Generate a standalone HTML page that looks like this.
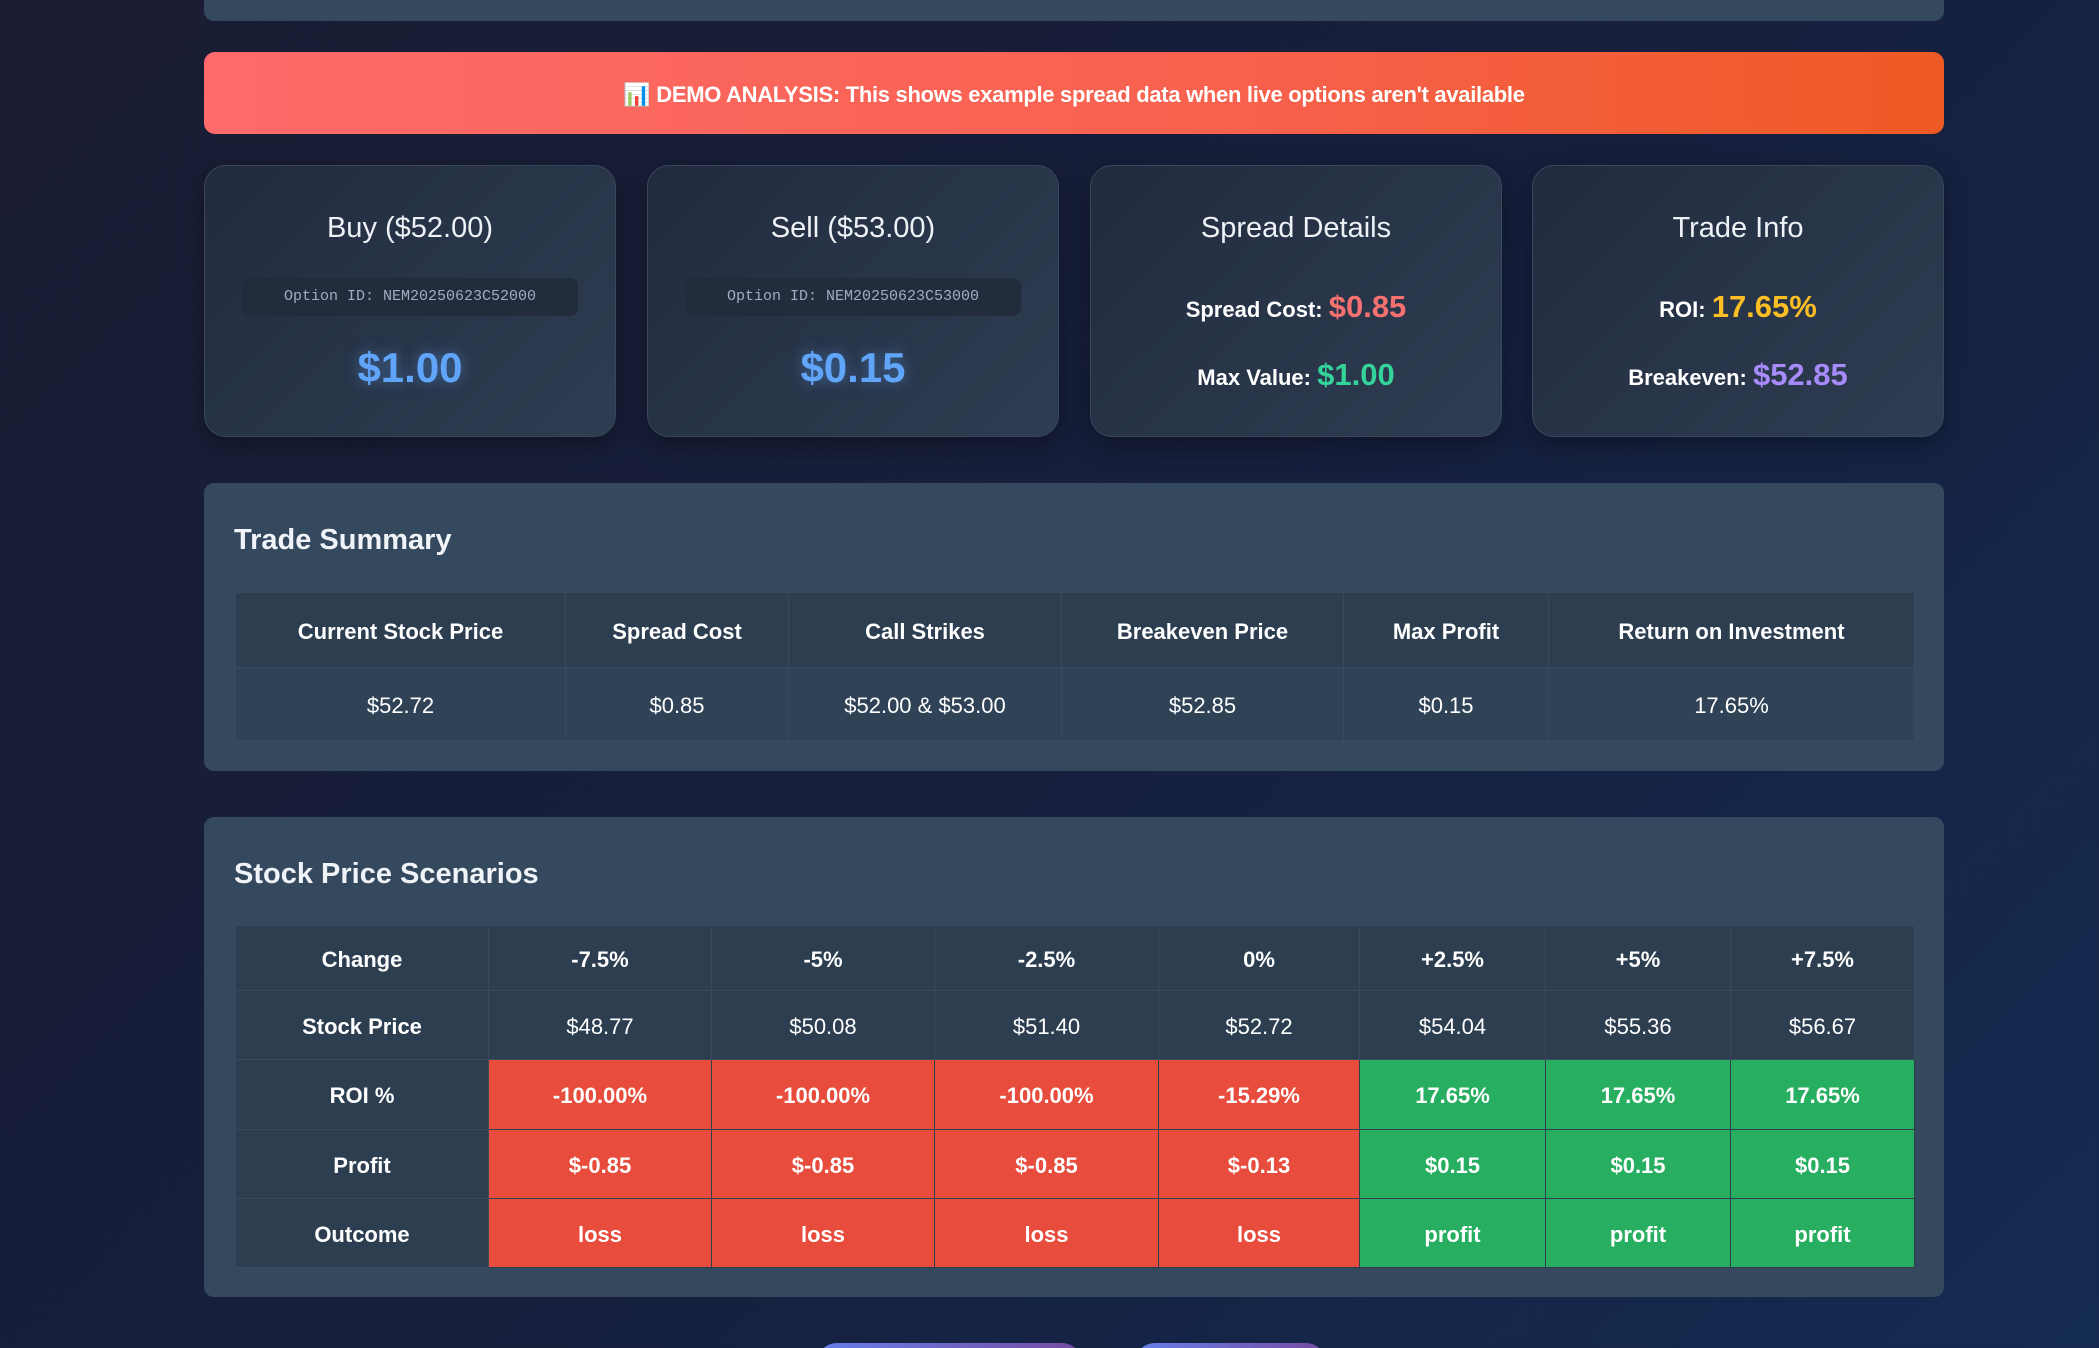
<!DOCTYPE html>
<html><head><meta charset="utf-8"><style>
*{box-sizing:border-box;margin:0;padding:0}
html,body{width:2099px;height:1348px;overflow:hidden}
body{background:linear-gradient(135deg,#1a1d33 0%,#161f3c 50%,#142b52 100%);font-family:"Liberation Sans",sans-serif;color:#fff;position:relative}
.top{position:absolute;left:204px;top:-20px;width:1740px;height:41px;background:#34495e;border-radius:10px}
.banner{position:absolute;left:204px;top:52px;width:1740px;height:82px;border-radius:11px;background:linear-gradient(90deg,#ff6b6b 0%,#f7614d 60%,#ee5a24 100%);display:flex;align-items:center;justify-content:center;font-weight:bold;font-size:22px;letter-spacing:-0.3px;padding-top:3px}
.card{position:absolute;top:165px;width:412px;height:272px;border-radius:22px;background:linear-gradient(135deg,#222b3e,#2e3d52);border:1px solid #3a475b;box-shadow:0 8px 24px rgba(0,0,0,.35);text-align:center}
.ct{position:absolute;left:0;right:0;top:46px;font-size:29px;color:#eef2f7}
.oid{position:absolute;left:37px;right:37px;top:112px;height:38px;border-radius:8px;background:#222c3c;font-family:"Liberation Mono",monospace;font-size:15px;color:#a0aec0;line-height:38px}
.price{position:absolute;left:0;right:0;top:178px;font-size:42px;font-weight:bold;color:#60a5fa;text-shadow:0 0 14px rgba(96,165,250,.5)}
.ln{position:absolute;left:0;right:0;font-size:22px;font-weight:bold;color:#fff}
.ln span{font-size:31px}
.sec{position:absolute;left:204px;width:1740px;background:#34495e;border-radius:10px}
.sec h2{position:absolute;left:30px;font-size:29px;font-weight:bold;color:#f0f3f7}
table{position:absolute;left:31px;border-collapse:collapse;table-layout:fixed;width:1679px}
td{border:1px solid #3a4a5e;text-align:center;font-size:22px;background:#2c3e50;color:#fff;padding-top:3px}
.h td{font-weight:bold}
.b{font-weight:bold}
.r{background:#e74c3c!important;border-color:#2c3e50}
.g{background:#27ae60!important;border-color:#2c3e50}
.btn{position:absolute;top:1343px;height:40px;border-radius:20px;background:linear-gradient(90deg,#667eea,#764ba2)}
</style></head><body>
<div class="top"></div>
<div class="banner">📊&nbsp;DEMO ANALYSIS: This shows example spread data when live options aren't available</div>

<div class="card" style="left:204px"><div class="ct">Buy ($52.00)</div><div class="oid">Option ID: NEM20250623C52000</div><div class="price">$1.00</div></div>
<div class="card" style="left:647px"><div class="ct">Sell ($53.00)</div><div class="oid">Option ID: NEM20250623C53000</div><div class="price">$0.15</div></div>
<div class="card" style="left:1090px"><div class="ct">Spread Details</div>
<div class="ln" style="top:123px">Spread Cost: <span style="color:#f87171">$0.85</span></div>
<div class="ln" style="top:191px">Max Value: <span style="color:#34d399">$1.00</span></div></div>
<div class="card" style="left:1532px"><div class="ct">Trade Info</div>
<div class="ln" style="top:123px">ROI: <span style="color:#fbbf24">17.65%</span></div>
<div class="ln" style="top:191px">Breakeven: <span style="color:#a78bfa">$52.85</span></div></div>

<div class="sec" style="top:483px;height:288px">
<h2 style="top:41px">Trade Summary</h2>
<table style="top:109px">
<colgroup><col style="width:330px"><col style="width:223px"><col style="width:273px"><col style="width:282px"><col style="width:205px"><col style="width:366px"></colgroup>
<tr class="h" style="height:75px"><td>Current Stock Price</td><td>Spread Cost</td><td>Call Strikes</td><td>Breakeven Price</td><td>Max Profit</td><td>Return on Investment</td></tr>
<tr style="height:73px"><td style="background:#2f4256">$52.72</td><td style="background:#2f4256">$0.85</td><td style="background:#2f4256">$52.00 &amp; $53.00</td><td style="background:#2f4256">$52.85</td><td style="background:#2f4256">$0.15</td><td style="background:#2f4256">17.65%</td></tr>
</table></div>

<div class="sec" style="top:817px;height:480px">
<h2 style="top:41px">Stock Price Scenarios</h2>
<table style="top:108px">
<colgroup><col style="width:253px"><col style="width:223px"><col style="width:223px"><col style="width:224px"><col style="width:201px"><col style="width:186px"><col style="width:185px"><col style="width:184px"></colgroup>
<tr class="h" style="height:65px;font-size:20px"><td>Change</td><td>-7.5%</td><td>-5%</td><td>-2.5%</td><td>0%</td><td>+2.5%</td><td>+5%</td><td>+7.5%</td></tr>
<tr style="height:69px"><td class="b">Stock Price</td><td>$48.77</td><td>$50.08</td><td>$51.40</td><td>$52.72</td><td>$54.04</td><td>$55.36</td><td>$56.67</td></tr>
<tr class="h" style="height:70px"><td>ROI %</td><td class="r">-100.00%</td><td class="r">-100.00%</td><td class="r">-100.00%</td><td class="r">-15.29%</td><td class="g">17.65%</td><td class="g">17.65%</td><td class="g">17.65%</td></tr>
<tr class="h" style="height:69px"><td>Profit</td><td class="r">$-0.85</td><td class="r">$-0.85</td><td class="r">$-0.85</td><td class="r">$-0.13</td><td class="g">$0.15</td><td class="g">$0.15</td><td class="g">$0.15</td></tr>
<tr class="h" style="height:69px"><td>Outcome</td><td class="r">loss</td><td class="r">loss</td><td class="r">loss</td><td class="r">loss</td><td class="g">profit</td><td class="g">profit</td><td class="g">profit</td></tr>
</table></div>

<div class="btn" style="left:817px;width:265px"></div>
<div class="btn" style="left:1135px;width:191px"></div>
</body></html>
